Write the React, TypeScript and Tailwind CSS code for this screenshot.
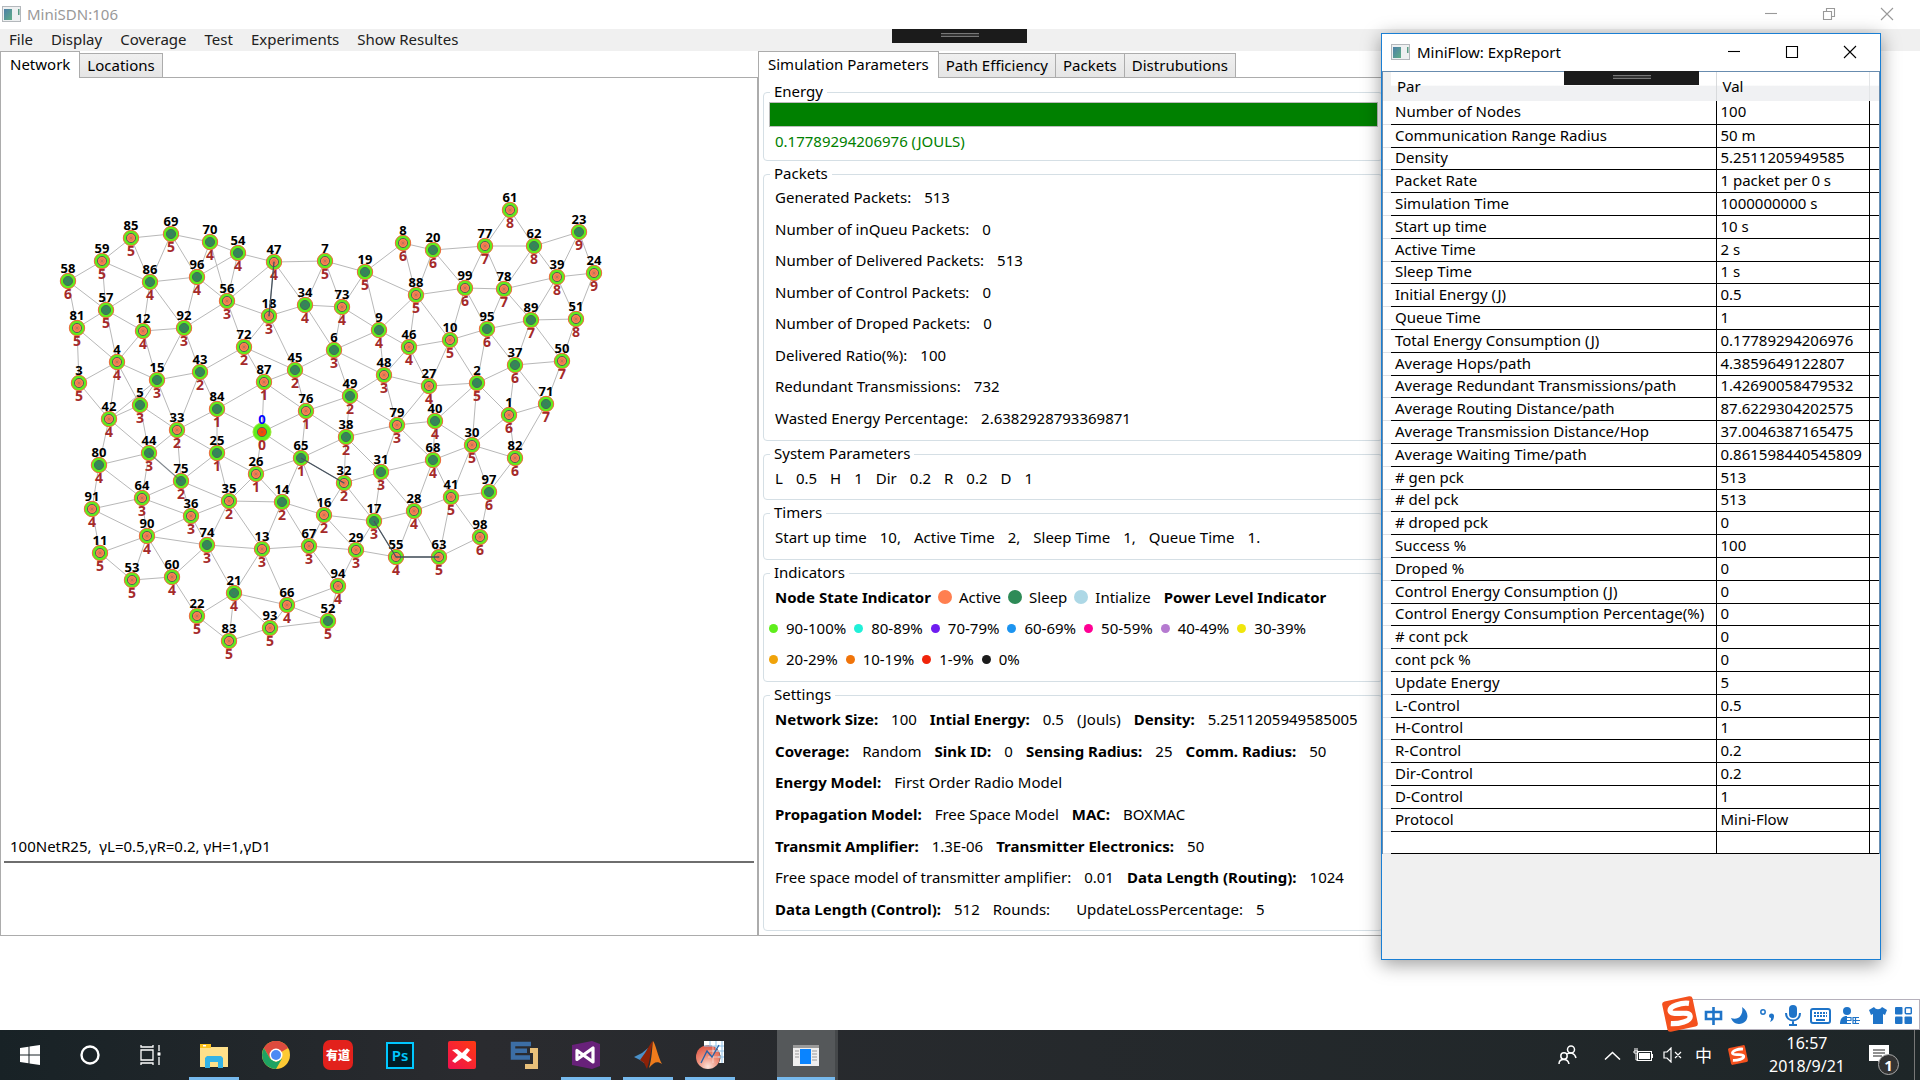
import React from 'react';

type NodeSpec = [id: number, x: number, y: number, level: number, state: 'a' | 's'];

const NODES: NodeSpec[] = [
  [85, 131, 238, 5, 'a'], [69, 171, 234, 5, 's'], [70, 210, 242, 4, 's'], [54, 238, 253, 4, 's'],
  [47, 274, 262, 4, 'a'], [7, 325, 261, 5, 'a'], [59, 102, 261, 5, 'a'], [58, 68, 281, 6, 's'],
  [86, 150, 282, 4, 's'], [96, 197, 277, 4, 's'], [56, 227, 301, 3, 'a'], [57, 106, 310, 5, 's'],
  [81, 77, 328, 5, 'a'], [12, 143, 331, 4, 'a'], [92, 184, 328, 3, 's'], [18, 269, 316, 3, 'a'],
  [34, 305, 305, 4, 's'], [72, 244, 347, 2, 'a'], [6, 334, 350, 3, 's'], [4, 117, 362, 4, 'a'],
  [43, 200, 372, 2, 's'], [15, 157, 380, 3, 's'], [45, 295, 370, 2, 's'], [87, 264, 382, 1, 'a'],
  [3, 79, 383, 5, 'a'], [5, 140, 405, 3, 's'], [84, 217, 409, 1, 's'], [76, 306, 411, 1, 'a'],
  [42, 109, 419, 4, 'a'], [33, 177, 430, 2, 'a'], [0, 262, 432, 0, 'a'], [61, 510, 210, 8, 'a'],
  [23, 579, 232, 9, 's'], [8, 403, 243, 6, 'a'], [20, 433, 250, 6, 's'], [77, 485, 246, 7, 'a'],
  [62, 534, 246, 8, 's'], [24, 594, 273, 9, 'a'], [39, 557, 277, 8, 'a'], [19, 365, 272, 5, 's'],
  [88, 416, 295, 5, 'a'], [99, 465, 288, 6, 'a'], [78, 504, 289, 7, 'a'], [73, 342, 307, 4, 'a'],
  [9, 379, 330, 4, 's'], [46, 409, 347, 4, 'a'], [10, 450, 340, 5, 'a'], [95, 487, 329, 6, 's'],
  [89, 531, 320, 7, 's'], [51, 576, 319, 8, 'a'], [37, 515, 365, 6, 's'], [50, 562, 361, 7, 'a'],
  [48, 384, 375, 3, 'a'], [27, 429, 386, 4, 'a'], [2, 477, 383, 5, 's'], [49, 350, 396, 2, 's'],
  [71, 546, 404, 7, 's'], [1, 509, 415, 6, 'a'], [79, 397, 425, 3, 'a'], [40, 435, 421, 4, 's'],
  [38, 346, 437, 2, 's'], [30, 472, 445, 5, 'a'], [68, 433, 460, 4, 's'], [82, 515, 458, 6, 'a'],
  [31, 381, 472, 3, 's'], [32, 344, 483, 2, 'a'], [65, 301, 458, 1, 's'], [41, 451, 497, 5, 'a'],
  [97, 489, 492, 6, 's'], [28, 414, 511, 4, 'a'], [17, 374, 521, 3, 's'], [16, 324, 515, 2, 'a'],
  [98, 480, 537, 6, 'a'], [67, 309, 546, 3, 'a'], [29, 356, 550, 3, 'a'], [55, 396, 557, 4, 'a'],
  [63, 439, 557, 5, 'a'], [94, 338, 586, 4, 'a'], [52, 328, 621, 5, 's'], [44, 149, 453, 3, 's'],
  [25, 217, 453, 1, 's'], [80, 99, 465, 4, 's'], [75, 181, 481, 2, 's'], [26, 256, 474, 1, 'a'],
  [64, 142, 498, 3, 'a'], [35, 229, 501, 2, 'a'], [14, 282, 502, 2, 's'], [91, 92, 509, 4, 'a'],
  [36, 191, 516, 3, 'a'], [90, 147, 536, 4, 'a'], [74, 207, 545, 3, 's'], [13, 262, 549, 3, 'a'],
  [11, 100, 553, 5, 'a'], [53, 132, 580, 5, 'a'], [60, 172, 577, 4, 'a'], [21, 234, 593, 4, 's'],
  [66, 287, 605, 4, 'a'], [22, 197, 616, 5, 'a'], [93, 270, 628, 5, 'a'], [83, 229, 641, 5, 'a'],
];

// Two nodes are linked when they are within communication range of each other.
const RANGE = 62.6;
const LINKS = NODES.flatMap((a, i) =>
  NODES.slice(i + 1)
    .filter((b) => Math.hypot(a[1] - b[1], a[2] - b[2]) <= RANGE)
    .map((b) => [a, b] as const),
);
// Links in use; the third value is how strongly the link is lit.
const ROUTES: [number, number, number][] = [[47, 18, 1], [65, 32, 1], [17, 55, 1], [55, 63, 1], [44, 75, 0.5]];
const byId = (id: number) => NODES.find((n) => n[0] === id)!;

function NetworkGraph() {
  return (
    <svg viewBox="1 78 640 752" width="640" height="752" role="img" aria-label="Sensor network topology" className="block">
      <g stroke="#b8b8b8" strokeWidth="1">
        {LINKS.map(([a, b]) => (
          <line key={`${a[0]}-${b[0]}`} x1={a[1]} y1={a[2]} x2={b[1]} y2={b[2]} />
        ))}
      </g>
      {NODES.map(([id, x, y, , state]) => (
        <g key={id}>
          <circle cx={x} cy={y} r={id === 0 ? 9 : 7.7} fill="#5fee1c" stroke={id === 0 ? '#9be83a' : '#f0663a'} strokeWidth="1" />
          <circle cx={x} cy={y} r="4.6" fill={id === 0 ? '#ff4500' : state === 'a' ? '#ff7f50' : '#2e8b57'} stroke="#4d6b52" strokeWidth="1" />
          <path d={`M${x - 3} ${y}h6M${x} ${y - 3}v6M${x - 2} ${y - 2}l4 4M${x - 2} ${y + 2}l4 -4`} stroke="#666" strokeOpacity=".35" strokeWidth=".7" />
        </g>
      ))}
      <g fontFamily="'Noto Sans', sans-serif" fontWeight="700" textAnchor="middle">
        {NODES.map(([id, x, y, level]) => (
          <g key={id}>
            <text x={x} y={y - 8} fontSize="13" fill={id === 0 ? '#0000ff' : '#000'}>{id}</text>
            <text x={x} y={y + 18} fontSize="14" fill="#a52a2a">{level}</text>
          </g>
        ))}
      </g>
      <g stroke="#47535f" strokeWidth="1.3">
        {ROUTES.map(([a, b, o]) => (
          <line key={`${a}-${b}`} x1={byId(a)[1]} y1={byId(a)[2]} x2={byId(b)[1]} y2={byId(b)[2]} strokeOpacity={o} />
        ))}
      </g>
    </svg>
  );
}

function AppIcon() {
  return (
    <svg width="20" height="16" viewBox="0 0 20 16" aria-hidden="true">
      <defs>
        <linearGradient id="pane" x1="0" y1="0" x2="1" y2="1">
          <stop offset="0" stopColor="#4d7fa8" />
          <stop offset="1" stopColor="#5fae86" />
        </linearGradient>
      </defs>
      <rect x=".5" y=".5" width="18" height="15" fill="#eef0f1" stroke="#b4b8bc" />
      <rect x="2" y="3" width="8" height="11" fill="url(#pane)" />
      <rect x="16" y="3" width="1.5" height="6" fill="#5b9c86" />
    </svg>
  );
}

function WindowButtons({ restored }: { restored?: boolean }) {
  return (
    <div className="flex h-full">
      {[
        ['Minimize', 'M1 6.5h12'],
        ['Maximize', restored ? 'M1.5 4.5h8v8h-8zM4.5 4.5v-3h8v8h-3' : 'M1.5 1.5h11v11h-11z'],
        ['Close', 'M1 1l12 12M13 1L1 13'],
      ].map(([label, d]) => (
        <button key={label} type="button" aria-label={label} className="grid h-full w-[58px] place-items-center">
          <svg width="14" height="14" viewBox="0 0 14 14" fill="none" stroke="currentColor" strokeWidth="1.1">
            <path d={d} />
          </svg>
        </button>
      ))}
    </div>
  );
}

function Grip() {
  return (
    <div className="flex h-[14px] w-[135px] justify-center bg-[#1b1b1b] pt-1">
      <div className="h-1 w-[38px] border-y border-[#777] bg-[#333]" />
    </div>
  );
}

function Tab({ label, active }: { label: string; active?: boolean }) {
  return (
    <button
      type="button"
      role="tab"
      aria-selected={!!active}
      className={
        active
          ? 'relative z-10 -mb-px h-[27px] border border-b-0 border-[#acacac] bg-white px-[9px] pb-0.5'
          : 'h-6 border border-b-0 border-l-0 border-[#acacac] bg-linear-to-b from-[#f0f0f0] to-[#e5e5e5] px-[7px] pb-0.5'
      }
    >
      {label}
    </button>
  );
}

function Group({ title, children }: { title: string; children: React.ReactNode }) {
  return (
    <fieldset className="min-w-0 rounded border border-[#d5dfe5] pr-1 pl-[5px]">
      <legend className="ml-px px-1 pb-0.5 leading-[18px]">{title}</legend>
      {children}
    </fieldset>
  );
}

const PACKETS = [
  ['Generated Packets:', '513'], ['Number of inQueu Packets:', '0'], ['Number of Delivered Packets:', '513'],
  ['Number of Control Packets:', '0'], ['Number of Droped Packets:', '0'], ['Delivered Ratio(%):', '100'],
  ['Redundant Transmissions:', '732'], ['Wasted Energy Percentage:', '2.6382928793369871'],
];

// An asterisk in front marks a bold caption.
const SETTINGS = [
  ['*Network Size:', '100', '*Intial Energy:', '0.5', '(Jouls)', '*Density:', '5.2511205949585005'],
  ['*Coverage:', 'Random', '*Sink ID:', '0', '*Sensing Radius:', '25', '*Comm. Radius:', '50'],
  ['*Energy Model:', 'First Order Radio Model'],
  ['*Propagation Model:', 'Free Space Model', '*MAC:', 'BOXMAC'],
  ['*Transmit Amplifier:', '1.3E-06', '*Transmitter Electronics:', '50'],
  ['Free space model of transmitter amplifier:', '0.01', '*Data Length (Routing):', '1024'],
  ['*Data Length (Control):', '512', 'Rounds:', '', 'UpdateLossPercentage:', '5'],
];

const POWER = [
  [['90-100%', '#5fee1c'], ['80-89%', '#20f0d8'], ['70-79%', '#6f1cf0'], ['60-69%', '#1c94f0'], ['50-59%', '#ff0094'], ['40-49%', '#b57ad0'], ['30-39%', '#f0e60c']],
  [['20-29%', '#f0a30a'], ['10-19%', '#f0740a'], ['1-9%', '#f0240a'], ['0%', '#1b1b1b']],
];

const REPORT = [
  ['Number of Nodes', '100'], ['Communication Range Radius', '50 m'], ['Density', '5.2511205949585'],
  ['Packet Rate', '1 packet per 0 s'], ['Simulation Time', '1000000000 s'], ['Start up time', '10 s'],
  ['Active Time', '2 s'], ['Sleep Time', '1 s'], ['Initial Energy (J)', '0.5'], ['Queue Time', '1'],
  ['Total Energy Consumption (J)', '0.17789294206976'], ['Average Hops/path', '4.3859649122807'],
  ['Average Redundant Transmissions/path', '1.42690058479532'], ['Average Routing Distance/path', '87.6229304202575'],
  ['Average Transmission Distance/Hop', '37.0046387165475'], ['Average Waiting Time/path', '0.861598440545809'],
  ['# gen pck', '513'], ['# del pck', '513'], ['# droped pck', '0'], ['Success %', '100'], ['Droped %', '0'],
  ['Control Energy Consumption (J)', '0'], ['Control Energy Consumption Percentage(%)', '0'], ['# cont pck', '0'],
  ['cont pck %', '0'], ['Update Energy', '5'], ['L-Control', '0.5'], ['H-Control', '1'], ['R-Control', '0.2'],
  ['Dir-Control', '0.2'], ['D-Control', '1'], ['Protocol', 'Mini-Flow'], ['', ''],
];

function Parameters() {
  return (
    <div className="flex flex-col gap-[3px] py-1 pr-1 pl-1">
      <Group title="Energy">
        <div role="progressbar" aria-label="Energy" aria-valuenow={100} className="h-[25px] border border-[#bcbcbc] bg-[#008000]" />
        <p className="mt-1 mb-[9px] pl-1.5 text-[#008000]">0.17789294206976 (JOULS)</p>
      </Group>
      <Group title="Packets">
        <dl className="mt-[3px] mb-3 flex h-[241px] flex-col justify-between pl-1.5">
          {PACKETS.map(([k, v]) => (
            <div key={k} className="flex gap-[13px]">
              <dt>{k}</dt>
              <dd>{v}</dd>
            </div>
          ))}
        </dl>
      </Group>
      <Group title="System Parameters">
        <p className="mt-1 mb-[11px] flex gap-[13px] pl-1.5">
          {['L', '0.5', 'H', '1', 'Dir', '0.2', 'R', '0.2', 'D', '1'].map((t, i) => <span key={i}>{t}</span>)}
        </p>
      </Group>
      <Group title="Timers">
        <p className="mt-1 mb-3 flex gap-[13px] pl-1.5">
          {['Start up time', '10,', 'Active Time', '2,', 'Sleep Time', '1,', 'Queue Time', '1.'].map((t, i) => <span key={i}>{t}</span>)}
        </p>
      </Group>
      <Group title="Indicators">
        <div className="mt-1 mb-3 flex h-[82px] flex-col justify-between">
          <div className="flex items-center pl-1.5 whitespace-nowrap">
            <b>Node State Indicator</b>
            {[['Active', '#ff7f50'], ['Sleep', '#2e8b57'], ['Intialize', '#add8e6']].map(([t, c]) => (
              <span key={t} className="ml-[7px] flex items-center gap-[7px]">
                <i className="size-[14px] rounded-full" style={{ background: c }} />
                {t}
              </span>
            ))}
            <b className="ml-[13px]">Power Level Indicator</b>
          </div>
          {POWER.map((row, i) => (
            <div key={i} className="flex gap-2">
              {row.map(([t, c]) => (
                <span key={t} className="flex items-center gap-2">
                  <i className="size-[9px] rounded-full" style={{ background: c }} />
                  {t}
                </span>
              ))}
            </div>
          ))}
        </div>
      </Group>
      <Group title="Settings">
        <div className="mt-1 mb-[11px] flex h-[210px] flex-col justify-between pl-1.5 whitespace-nowrap">
          {SETTINGS.map((row, i) => (
            <div key={i} className="flex gap-[13px]">
              {row.map((t, j) => (t.startsWith('*') ? <b key={j}>{t.slice(1)}</b> : <span key={j}>{t}</span>))}
            </div>
          ))}
        </div>
      </Group>
    </div>
  );
}

function ReportWindow() {
  return (
    <section className="absolute top-[33px] right-[39px] flex h-[927px] w-[500px] flex-col border border-[#1a7fd4] bg-[#f0f0f0] shadow-[0_4px_18px_rgba(0,0,0,0.4)]">
      <header className="flex h-[37px] items-center bg-white pr-px pb-0.5 pl-[9px]">
        <AppIcon />
        <h2 className="flex-1 pl-1.5">MiniFlow: ExpReport</h2>
        <WindowButtons />
      </header>
      <div className="relative border-x border-t border-[#688caf]">
        <table className="w-full table-fixed border-collapse">
          <colgroup>
            <col className="w-2" />
            <col className="w-[325px]" />
            <col className="w-[153px]" />
            <col />
          </colgroup>
          <thead>
            <tr className="h-[29px] bg-linear-to-b from-white from-45% to-[#f0f1f3] to-50% text-left">
              <td className="bg-[#f0f0f0]" />
              <th className="border-r border-[#d8dadc] pb-0.5 pl-1.5 font-normal" scope="col">Par</th>
              <th className="border-r border-[#e3e5e7] pb-0.5 pl-1.5 font-normal" scope="col">Val</th>
              <td />
            </tr>
          </thead>
          <tbody>
            {REPORT.map(([k, v], i) => (
              <tr key={i} className={i % 5 === 2 ? 'h-[22px] bg-white leading-[18px]' : 'h-[23px] bg-white leading-[18px]'}>
                <td className="border-b border-[#dfe1e5]" />
                <td className="border-r border-b border-black pb-0.5 pl-1 whitespace-nowrap">{k}</td>
                <td className="border-r border-b border-black pb-0.5 pl-1 whitespace-nowrap">{v}</td>
                <td className="border-b border-black" />
              </tr>
            ))}
          </tbody>
        </table>
        <div className="absolute -top-px left-[181px]">
          <Grip />
        </div>
      </div>
    </section>
  );
}

function SogouMark({ size }: { size: number }) {
  return (
    <svg width={size} height={size} viewBox="0 0 36 36" aria-hidden="true">
      <g transform="rotate(-12 18 18)">
        <rect x="2.500" y="2.500" width="31" height="31" rx="3" fill="#f4511e" />
        <path d="M29 9.500C22 7 9 8 9 13c0 5.500 18.500 3 18.500 9 0 5.500-13 5.500-20.500 3.500" fill="none" stroke="#fff" strokeWidth="5.200" />
      </g>
    </svg>
  );
}

function ImeBar() {
  return (
    <div className="absolute right-0 bottom-0 flex items-end text-[#1f74c8]">
      <div className="z-10 -mr-[18px] -mb-0.5"><SogouMark size={36} /></div>
      <div className="flex h-[31px] w-[240px] items-center justify-between border border-[#b5b0bb] bg-white pt-0.5 pr-[7px] pl-[23px]">
        <svg width="19" height="18" viewBox="0 0 19 18" fill="none" stroke="currentColor" strokeWidth="2.600"><path d="M2 5h15v7H2zM9.500 0v18" /></svg>
        <svg width="18" height="18" viewBox="0 0 18 18" fill="currentColor"><path d="M11 0c9 6 6 17-3 17-4 0-7-3-8-6 7 3 13-3 11-11z" /></svg>
        <svg width="19" height="15" viewBox="-2 0 19 15" fill="currentColor"><circle cx="3" cy="4" r="2.200" fill="none" stroke="currentColor" strokeWidth="1.500" /><path d="M9 8a2.500 2.500 0 1 1 5 0c0 3-1 5-4 6 1-2 1-3 1-4-1 0-2-1-2-2z" /></svg>
        <svg width="16" height="21" viewBox="0 0 16 21" fill="currentColor"><rect x="4" width="8" height="13" rx="4" /><path d="M1 8c0 10 14 10 14 0M8 15v4M4 20h8" fill="none" stroke="currentColor" strokeWidth="2" /></svg>
        <svg width="21" height="16" viewBox="0 0 21 16"><rect x="1" y="1" width="19" height="14" rx="2" fill="none" stroke="currentColor" strokeWidth="2" /><path d="M4 5h13M4 8h13" stroke="currentColor" strokeWidth="2" strokeDasharray="2 1" /><path d="M6 12h9" stroke="currentColor" strokeWidth="2" /></svg>
        <svg width="21" height="18" viewBox="0 0 21 18" fill="currentColor"><circle cx="8" cy="4" r="4" /><path d="M1 17c0-6 3-8 7-8v8z" /><path d="M20 10.500h-6v6h6M14 13.500h7M7 10.500h5v3H7v3h5M16.500 10v7" fill="none" stroke="currentColor" strokeWidth="1.200" /></svg>
        <svg width="18" height="17" viewBox="0 0 18 17" fill="currentColor"><path d="M5 0c2 3 6 3 8 0l5 3-2 5-2-1v10H4V7L2 8 0 3z" /></svg>
        <svg width="17" height="17" viewBox="0 0 17 17" fill="currentColor"><rect width="7.500" height="7.500" rx="1" /><rect y="9.500" width="7.500" height="7.500" rx="1" /><rect x="9.500" y="9.500" width="7.500" height="7.500" rx="1" /><rect x="10.300" y=".8" width="6" height="6" rx="1" fill="none" stroke="currentColor" strokeWidth="1.500" /></svg>
      </div>
    </div>
  );
}

const S = 28;
const ICONS: { name: string; open?: boolean; art: React.ReactNode }[] = [
  { name: 'File Explorer', open: true, art: (
    <svg width={S} height={S} viewBox="0 0 28 28"><path d="M0 3h11v3h17v20H0z" fill="#ffe08a" /><path d="M0 3h11v4H0z" fill="#fcc11d" /><rect x="3" y="4" width="3" height="1.500" fill="#fff" /><path d="M5 27V17l2-2h14l2 2v10h-5v-6h-8v6z" fill="#35b3e6" /></svg>) },
  { name: 'Google Chrome', art: (
    <svg width={S} height={S} viewBox="0 0 28 28"><circle cx="14" cy="14" r="14" fill="#fcc934" /><path d="M14 14L1.900 7A14 14 0 0 1 26.100 7z" fill="#dd4b3e" /><path d="M14 14V7h12.100A14 14 0 0 0 1.900 7L8 17.500z" fill="#dd4b3e" /><path d="M1.900 7A14 14 0 0 0 14 28l6-10.500-6 3.500-6-3.500z" fill="#1ea362" /><circle cx="14" cy="14" r="6.500" fill="#fff" /><circle cx="14" cy="14" r="5" fill="#4a8af4" /></svg>) },
  { name: 'Youdao', art: (
    <span className="grid h-[30px] w-[30px] place-items-center rounded-[7px] bg-[#e2211c] font-['Noto_Sans_CJK_SC',sans-serif] text-[12px] leading-none font-black text-white">有道</span>) },
  { name: 'Photoshop', art: (
    <span className="grid h-[27px] w-[28px] place-items-center border-2 border-[#00c8ff] bg-[#001d26] text-[15px] leading-none font-semibold text-[#00c8ff]">Ps</span>) },
  { name: 'XMind', art: (
    <svg width={S} height={S} viewBox="0 0 28 28"><defs><linearGradient id="xm" x1="0" y1="1" x2="1" y2="0"><stop offset="0" stopColor="#f0104f" /><stop offset="1" stopColor="#ff3a12" /></linearGradient></defs><rect width="28" height="28" rx="2" fill="url(#xm)" /><path d="M4 9l5-1 5 4 5-5 3 2-4 5 6 5-4 2-6-4-7 5-3-2 6-6z" fill="#fff" /></svg>) },
  { name: 'Draw tool', art: (
    <svg width={S} height={S} viewBox="0 0 28 28" fill="none" strokeWidth="5"><path d="M20 9.500h5.500v16H15" stroke="#e8c07a" /><path d="M21 3H3v13.500h17M3 9.800h14" stroke="#3c6ea5" strokeWidth="4.500" /></svg>) },
  { name: 'Visual Studio', open: true, art: (
    <svg width={S} height={S} viewBox="0 0 28 28"><path d="M0 4L20 0l8 3v22l-8 3L0 24z" fill="#68217a" /><path d="M5 9.500v9L21 7v14z" fill="none" stroke="#fff" strokeWidth="3.200" strokeLinejoin="round" /></svg>) },
  { name: 'MATLAB', open: true, art: (
    <svg width={S} height={S} viewBox="0 0 28 28"><path d="M0 16l8-4 6-5-4 15-4-3z" fill="#4a90c8" /><path d="M6 19l5-7C15 6 17 1 19 0c-2 8-3 20-6 28l-3-6z" fill="#8c2208" /><path d="M19 0c3 4 5 16 9 23-5-3-8-2-13 4 3-9 3-20 4-27z" fill="#ee7b1c" /></svg>) },
  { name: 'Curve digitizer', open: true, art: (
    <svg width={S} height={S} viewBox="0 0 28 28"><defs><radialGradient id="ball" cx=".5" cy=".9" r=".9"><stop offset="0" stopColor="#fbe3da" /><stop offset=".5" stopColor="#ee8d78" /><stop offset="1" stopColor="#dc5545" /></radialGradient></defs><circle cx="12" cy="16" r="12" fill="url(#ball)" /><path d="M8 0h20v22h-5A12 12 0 0 0 8 5z" fill="#fff" /><path d="M8 5h20M17 10h11M22 16h6M14 0v5M20 0v10M26 0v22" stroke="#8fc1e8" /><path d="M12 10h12M12 16h12M17 4v18" stroke="#fff" strokeOpacity=".5" /><path d="M5 22L11 10l5 6 7-12" fill="none" stroke="#2563a8" strokeWidth="1.300" /></svg>) },
];

function Taskbar() {
  return (
    <footer className="flex h-[50px] items-stretch bg-linear-to-r from-[#182226] via-[#2a2b2f] via-25% to-[#1e2628] text-white">
      <button type="button" aria-label="Start" className="grid w-[60px] place-items-center">
        <svg width="20" height="20" viewBox="0 0 20 20" fill="#fff"><path d="M0 3l8.500-1.200v7.700H0zM9.500 1.600L20 0v9.500H9.500zM0 10.500h8.500v7.700L0 17zM9.500 10.500H20V20L9.500 18.400z" /></svg>
      </button>
      <button type="button" aria-label="Search" className="grid w-[60px] place-items-center">
        <svg width="20" height="20" viewBox="0 0 20 20" fill="none" stroke="#fff" strokeWidth="2.400"><circle cx="10" cy="10" r="8.500" /></svg>
      </button>
      <button type="button" aria-label="Task view" className="grid w-[60px] place-items-center">
        <svg width="21" height="20" viewBox="0 0 21 20" fill="none" stroke="#fff" strokeWidth="1.300"><path d="M1 5h12v10H1zM1 0v2h12V0M1 20v-2h12v2M19 0v6M19 12v8M19 7.500v3" /><path d="M17.500 7.500h3v3h-3z" fill="#fff" stroke="none" /></svg>
      </button>
      <div className="flex pl-[3px]">
        {ICONS.map(({ name, open, art }) => (
          <button key={name} type="button" aria-label={name} className="relative grid w-[62px] place-items-center">
            {art}
            {open && <span className="absolute inset-x-[6px] bottom-0 h-[3px] bg-[#76b9ed]" />}
          </button>
        ))}
      </div>
      <button type="button" aria-label="MiniSDN" className="relative ml-9 grid w-[61px] place-items-center border-r-[3px] border-[#45484a] bg-[#55585a]">
        <svg width="26" height="21" viewBox="0 0 26 21"><rect width="26" height="21" fill="#efefef" /><rect width="26" height="3" fill="#9a9a9a" /><rect x="7" y="4" width="11" height="15" fill="#0a84ff" /><path d="M2 6h4M2 9h4M2 12h4M19 6h5M19 9h5M19 12h5M19 15h5" stroke="#999" /></svg>
        <span className="absolute inset-x-0 bottom-0 h-[3px] bg-[#76b9ed]" />
      </button>
      <div className="ml-auto flex items-center pr-[5px]">
        <svg className="mr-[27px]" width="19" height="20" viewBox="0 0 19 20" fill="none" stroke="#fff" strokeWidth="1.500"><circle cx="13" cy="4.500" r="3.500" /><circle cx="6" cy="11" r="3.200" /><path d="M1 19c0-6 9-6 10 0M9 9c3-2 8-1 9 4" /></svg>
        <svg className="mr-3" width="17" height="9" viewBox="0 0 17 9" fill="none" stroke="#fff" strokeWidth="1.500"><path d="M1 8.500l7.500-7 7.500 7" /></svg>
        <svg className="mr-[10px]" width="20" height="14" viewBox="0 0 20 14" fill="none" stroke="#fff"><rect x="4.500" y="3.500" width="14" height="9" /><rect x="6" y="5" width="11" height="6" fill="#fff" stroke="none" /><path d="M19.500 6v4M1 3h4v2H1zM2 0v3M4 0v3M3 5v7h2" /></svg>
        <svg className="mr-3" width="20" height="16" viewBox="0 0 20 16" fill="none" stroke="#fff" strokeWidth="1.200"><path d="M1 5h3l4-4v14l-4-4H1zM12 5l6 6M18 5l-6 6" /></svg>
        <span className="mr-4 w-[17px] text-center font-['Noto_Sans_CJK_SC',sans-serif] text-[17px]">中</span>
        <SogouMark size={20} />
        <div className="ml-[18px] flex w-[82px] flex-col text-center text-[16px] leading-[23px]">
          <span>16:57</span>
          <span>2018/9/21</span>
        </div>
        <div className="relative ml-[21px] w-[31px]">
          <svg width="20" height="20" viewBox="0 0 20 20"><path d="M0 0h20v16h-5l-3 4-3-4H0z" fill="#fff" /><path d="M4 5h12M4 8h12M4 11h9" stroke="#222" /></svg>
          <span className="absolute top-[9px] left-[9px] grid size-[21px] place-items-center rounded-full border border-[#aaa] bg-[#333] text-[15px] font-bold">1</span>
        </div>
        <div className="ml-[14px] h-full w-px bg-[#777]" />
      </div>
    </footer>
  );
}

export default function App() {
  return (
    <div className="flex min-h-screen flex-col bg-white font-['Noto_Sans','Noto_Sans_CJK_SC',sans-serif] text-[15px] leading-5 text-black">
      <div className="relative flex flex-1 flex-col">
        <header className="flex h-[29px] items-center pr-1 pb-0.5 pl-[2px] text-[#999]">
          <AppIcon />
          <h1 className="flex-1 pl-[5px]">MiniSDN:106</h1>
          <WindowButtons restored />
        </header>
        <div className="relative">
          <nav className="flex h-[22px] items-center gap-[18px] bg-[#f0f0f0] pb-0.5 pl-[9px] text-[#212121]">
            {['File', 'Display', 'Coverage', 'Test', 'Experiments', 'Show Resultes'].map((m) => (
              <button key={m} type="button">{m}</button>
            ))}
          </nav>
          <div className="absolute top-0 left-[892px]">
            <Grip />
          </div>
        </div>
        <main className="grid grid-cols-[758fr_630fr_532fr]">
          <section className="flex flex-col">
            <div role="tablist" className="flex items-end">
              <Tab label="Network" active />
              <Tab label="Locations" />
            </div>
            <div className="flex flex-1 flex-col border border-[#acacac]">
              <NetworkGraph />
              <div className="mt-1.5 pl-[9px]">100NetR25,&nbsp; γL=0.5,γR=0.2, γH=1,γD1</div>
              <hr className="mx-[3px] mt-[5px] border-t-2 border-[#6e6e6e]" />
            </div>
          </section>
          <section>
            <div role="tablist" className="flex items-end">
              <Tab label="Simulation Parameters" active />
              <Tab label="Path Efficiency" />
              <Tab label="Packets" />
              <Tab label="Distrubutions" />
            </div>
            <div className="border border-[#acacac]">
              <Parameters />
            </div>
          </section>
        </main>
        <ReportWindow />
        <ImeBar />
      </div>
      <Taskbar />
    </div>
  );
}
